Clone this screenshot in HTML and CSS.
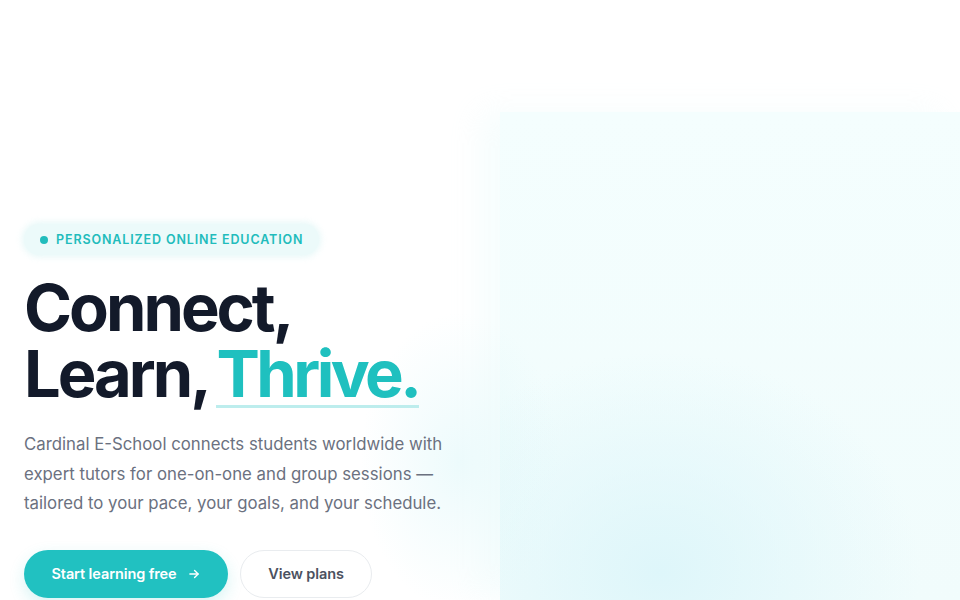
FILE: index.html
```html
<!DOCTYPE html>
<html lang="en">
<head>
<meta charset="utf-8">
<title>Cardinal E-School</title>
<link rel="stylesheet" href="styles.css">
</head>
<body>
<header class="topbar"></header>
<main class="hero">
  <section class="hero-copy">
    <div class="badge"><span class="badge-dot"></span>PERSONALIZED ONLINE EDUCATION</div>
    <h1 class="title">Connect,<br>Learn, <span class="accent">Thrive.</span></h1>
    <p class="lead">Cardinal E-School connects students worldwide with expert tutors for one-on-one and group sessions — tailored to your pace, your goals, and your schedule.</p>
    <div class="actions">
      <a class="btn btn-primary" href="#">Start learning free
        <svg class="arrow" width="14" height="14" viewBox="0 0 24 24" fill="none" stroke="currentColor" stroke-width="2.4" stroke-linecap="round" stroke-linejoin="round"><path d="M5 12h14"/><path d="M13 6l6 6-6 6"/></svg>
      </a>
      <a class="btn btn-secondary" href="#">View plans</a>
    </div>
  </section>
  <section class="hero-visual"></section>
</main>
</body>
</html>
```
FILE: styles.css
```css
* { box-sizing: border-box; }
html, body { margin: 0; padding: 0; }
body {
  font-family: Inter, "Noto Sans", "Liberation Sans", sans-serif;
  background: #ffffff;
  color: #111827;
  overflow: hidden;
  height: 600px;
}
.topbar { height: 112px; }
.hero {
  display: grid;
  grid-template-columns: 500px 1fr;
  height: 488px;
  position: relative;
}
.hero-copy {
  padding: 112px 0 0 24px;
  position: relative;
}
.hero-copy::after {
  content: "";
  position: absolute;
  right: -60px;
  top: 200px;
  width: 200px;
  height: 300px;
  background: radial-gradient(closest-side, rgba(225,248,250,0.6), rgba(255,255,255,0));
  pointer-events: none;
}
.badge {
  display: inline-flex;
  align-items: center;
  gap: 8px;
  height: 31px;
  padding: 0 16px 0 16px;
  border-radius: 999px;
  background: #ecfafa;
  box-shadow: 0 0 6px 2px rgba(225,246,246,0.8);
  color: #22bcbc;
  font-size: 12.5px;
  font-weight: 600;
  letter-spacing: 0.88px;
  position: relative;
  z-index: 1;
}
.badge-dot {
  width: 8px;
  height: 8px;
  border-radius: 50%;
  background: #22bcbc;
}
.title {
  margin: 20px 0 0 0;
  font-size: 65px;
  line-height: 66px;
  font-weight: 700;
  letter-spacing: -3px;
  word-spacing: -3px;
  color: #131a2a;
  position: relative;
  z-index: 1;
}
.accent {
  color: #1fc0bf;
  display: inline-block;
  line-height: 62px;
  letter-spacing: -3.5px;
  border-bottom: 3px solid #bdeded;
}
.lead {
  margin: 22px 0 0 0;
  max-width: 440px;
  font-size: 16.8px;
  line-height: 29.5px;
  color: #6b7180;
  position: relative;
  z-index: 1;
}
.actions {
  display: flex;
  gap: 12px;
  margin-top: 31px;
  position: relative;
  z-index: 1;
}
.btn {
  display: inline-flex;
  align-items: center;
  justify-content: center;
  height: 48px;
  border-radius: 999px;
  font-size: 14.5px;
  font-weight: 600;
  text-decoration: none;
  letter-spacing: -0.1px;
}
.btn-primary {
  width: 204px;
  background: #21c1c1;
  color: #ffffff;
  gap: 10px;
  box-shadow: 0 6px 16px rgba(33,193,193,0.18);
}
.arrow { margin-top: 1px; }
.btn-secondary {
  width: 132px;
  background: #ffffff;
  color: #4b5160;
  border: 1px solid #e9ecef;
}
.hero-visual {
  background:
    radial-gradient(ellipse 260px 220px at 160px 460px, rgba(222,246,250,1), rgba(222,246,250,0) 100%),
    linear-gradient(180deg, #f4fefe 0%, #f1fcfc 100%);
  box-shadow: -20px 0 30px rgba(244,253,253,0.8);
  height: 488px;
}
```
